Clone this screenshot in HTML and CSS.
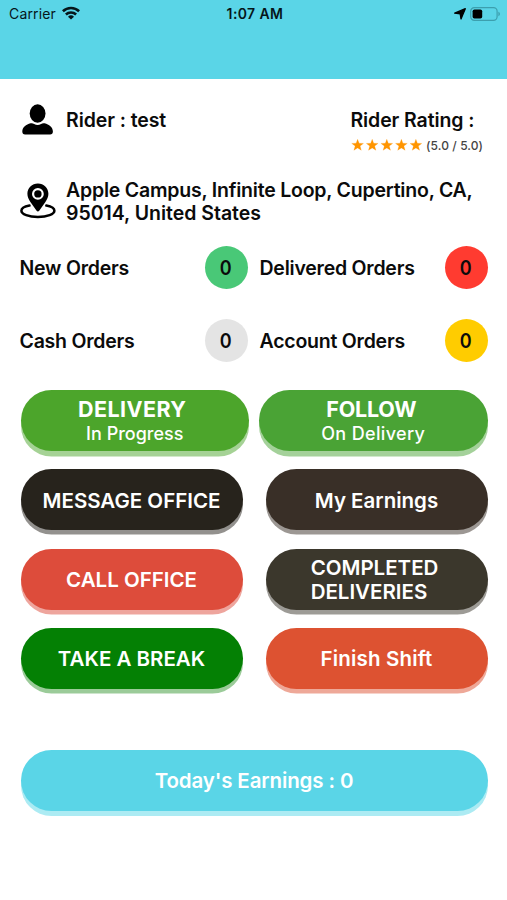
FILE: index.html
```html
<!DOCTYPE html>
<html lang="en">
<head>
<meta charset="utf-8">
<meta name="viewport" content="width=device-width, initial-scale=1">
<title>Rider</title>
<link rel="stylesheet" href="styles.css">
</head>
<body>
<header class="topbar">
  <div class="status">
    <div class="status-left">
      <span class="carrier">Carrier</span>
      <svg class="wifi" viewBox="0 0 18 14" width="18" height="14"><g fill="none" stroke="#06161a" stroke-width="2.6"><path d="M.9 5.200a11.800 11.800 0 0 1 16.200 0"/><path d="M3.900 8.500a7.400 7.400 0 0 1 10.200 0"/></g><path d="M9 13.600 6 10.800a4.300 4.300 0 0 1 6 0z" fill="#06161a"/></svg>
    </div>
    <span class="clock">1:07 AM</span>
    <div class="status-right">
      <svg viewBox="0 0 12 12" width="12" height="12"><path d="M11.300.7 7 11 6.200 5.900.7 5.200z" fill="#000" stroke="#000" stroke-width="1.300" stroke-linejoin="round"/></svg>
      <svg viewBox="0 0 31 14" width="31" height="14"><rect x=".7" y=".7" width="26.400" height="12.600" rx="3.600" fill="none" stroke="#3c9fae" stroke-width="1.200"/><rect x="2.600" y="2.500" width="9.600" height="9" rx="1.800" fill="#000"/><path d="M28.400 4.800c2 .7 2 3.700 0 4.400z" fill="#3c9fae"/></svg>
    </div>
  </div>
</header>
<main class="content">
  <section class="rider">
    <svg class="person" viewBox="0 0 31 31" width="31" height="31"><ellipse cx="15.600" cy="9.500" rx="7.900" ry="9.300"/><path d="M8.600 19.300c1.500-.4 2.500.1 3.500.8q3.500 2 7 0c1-.7 2-1.200 3.500-.8 4.500 1.200 8.200 4 8.300 8.300 0 2-1 2.900-2.800 2.900H3.100C1.300 30.500.3 29.600.3 27.600c.1-4.300 3.800-7.100 8.300-8.300z"/></svg>
    <span class="label name">Rider : test</span>
    <div class="rating">
      <span class="label rating-title">Rider Rating :</span>
      <div class="score">
        <svg class="stars" viewBox="-.6 0 71 12" width="71" height="12"><defs><path id="star" d="M6 .2 7.500 4.200 11.900 4.400 8.500 7.100 9.700 11.300 6 8.900 2.300 11.300 3.500 7.100.1 4.400 4.500 4.200z"/></defs><g fill="#ff9500" stroke="#ff9500" stroke-width=".2"><use href="#star"/><use href="#star" x="14.600"/><use href="#star" x="29.200"/><use href="#star" x="43.800"/><use href="#star" x="58.300"/></g></svg>
        <span class="score-text">(5.0 / 5.0)</span>
      </div>
    </div>
  </section>
  <section class="address">
    <svg class="pin" viewBox="0 0 36 36" width="36" height="36"><path d="M9.500 22.600C4.500 23.500 1.400 25.400 1.400 27.700c0 3.400 7.300 6.200 16.500 6.200s16.500-2.800 16.500-6.200c0-2.300-3.100-4.200-8.100-5.100" fill="none" stroke="#000" stroke-width="2.500" stroke-linecap="round"/><path fill-rule="evenodd" d="M17.900.4c5.900 0 10.500 4.500 10.500 10.300 0 3-1.300 5.300-3 8.300L19.400 27.600q-1.500 2-3 0L10.400 19C8.700 16 7.400 13.700 7.400 10.700 7.400 4.900 12 .4 17.900.4zM17.900 5a5.900 5.900 0 1 0 0 11.800 5.900 5.900 0 0 0 0-11.800z"/><circle cx="17.900" cy="10.900" r="3.700"/></svg>
    <p class="label">Apple Campus, Infinite Loop, Cupertino, CA,<br><span class="line-two">95014, United States</span></p>
  </section>
  <section class="orders">
    <div class="order"><span class="label">New Orders</span><span class="count green"><i>0</i></span></div>
    <div class="order"><span class="label">Delivered Orders</span><span class="count red"><i>0</i></span></div>
    <div class="order"><span class="label">Cash Orders</span><span class="count gray"><i>0</i></span></div>
    <div class="order"><span class="label">Account Orders</span><span class="count yellow"><i>0</i></span></div>
  </section>
  <section class="actions">
    <div class="row wide">
      <button class="btn delivery"><b>DELIVERY</b><small>In Progress</small></button>
      <button class="btn follow"><b>FOLLOW</b><small>On Delivery</small></button>
    </div>
    <div class="row">
      <button class="btn message">MESSAGE OFFICE</button>
      <button class="btn earnings">My Earnings</button>
    </div>
    <div class="row">
      <button class="btn call">CALL OFFICE</button>
      <button class="btn completed"><span>COMPLETED<br>DELIVERIES</span></button>
    </div>
    <div class="row">
      <button class="btn break">TAKE A BREAK</button>
      <button class="btn finish">Finish Shift</button>
    </div>
  </section>
  <button class="btn today">Today's Earnings : 0</button>
</main>
</body>
</html>
```
FILE: styles.css
```css
* { box-sizing: border-box; }
body { margin: 0; min-height: 900px; background: #fff; color: #0b0b0b; font-family: Inter, "Liberation Sans", sans-serif; font-feature-settings: "calt" 0; }
svg { display: block; flex: none; }
p { margin: 0; }
.topbar { height: 79px; background: #5ad5e7; }
.status { display: grid; grid-template-columns: 1fr auto 1fr; align-items: center; height: 27px; padding: 0 6px 0 9px; color: #06161a; }
.status-left { display: flex; align-items: center; gap: 6px; font-size: 14px; letter-spacing: .15px; }
.wifi { margin-top: -2px; }
.status-right { display: flex; align-items: center; justify-content: flex-end; gap: 4px; }
.clock { font-size: 14px; font-weight: 600; letter-spacing: .4px; }
.content { padding: 0 19.500px 0 20.500px; }
.label { font-size: 19.500px; line-height: 23.400px; font-weight: 600; letter-spacing: -.2px; white-space: nowrap; }
.rider { display: flex; padding-top: 25px; height: 99px; }
.person { margin: .3px 0 0 1.500px; }
.name { margin: 5px 0 0 13px; letter-spacing: -.08px; }
.rating { margin: 5px 0 0 auto; width: 137px; }
.rating-title { letter-spacing: -.1px; }
.score { display: flex; align-items: center; gap: 4.500px; height: 16px; margin-top: 5px; }
.score-text { font-size: 12px; font-weight: 500; color: #444; letter-spacing: .1px; white-space: nowrap; }
.address { display: flex; height: 67px; }
.pin { margin: 5px 0 0 -.5px; }
.address .label { margin: 1px 0 0 10px; letter-spacing: -.21px; }
.address .line-two { letter-spacing: -.02px; }
.orders { display: grid; grid-template-columns: 228px 228px; column-gap: 12px; row-gap: 30px; margin: 1.300px 0 0 -1px; }
.order { display: flex; align-items: center; justify-content: space-between; height: 43px; }
.order .label { padding-top: 1.500px; letter-spacing: -.23px; }
.count { width: 43px; height: 43px; border-radius: 50%; display: grid; place-items: center; font-size: 20px; font-weight: 600; }
.count i { font-style: normal; transform: scaleX(.9); }
.green { background: #49c877; }
.red { background: #ff3b30; }
.gray { background: #e4e4e4; }
.yellow { background: #ffcc00; }
.actions { display: grid; row-gap: 18.400px; margin-top: 27.500px; }
.row { display: flex; justify-content: space-between; }
.btn { display: flex; flex-direction: column; align-items: center; justify-content: center; width: 222px; height: 61px; padding: 2px 0 0; border: 0; border-radius: 31px; color: #fff; font: 600 20.500px/24px Inter, "Liberation Sans", sans-serif; font-feature-settings: "calt" 0; white-space: nowrap; }
.wide .btn { width: 228.500px; padding-top: 2px; }
.btn b { font-weight: 700; font-size: 21.500px; line-height: 25px; }
.btn small { font-size: 18px; line-height: 24px; font-weight: 500; }
.delivery b { margin-right: 5px; letter-spacing: .4px; }
.delivery small { letter-spacing: 0; }
.follow b { margin-right: 4px; letter-spacing: -.2px; }
.follow small { letter-spacing: .35px; }
.completed span { margin-right: 4px; text-align: left; }
.delivery { background: #4ca52b; box-shadow: 0 5.500px 0 #a5d295; }
.follow { background: #4aa335; box-shadow: 0 5.500px 0 #a4d19a; }
.message { background: #27231c; box-shadow: 0 4.500px 0 #93918e; }
.earnings { background: #392f27; box-shadow: 0 4.500px 0 #9c9793; }
.call { background: #dd4c3b; box-shadow: 0 4.500px 0 #eea59d; }
.completed { background: #3b372c; box-shadow: 0 4.500px 0 #9d9b96; padding-top: 1px; }
.break { background: #048004; box-shadow: 0 4.500px 0 #9bcb99; }
.finish { background: #dd5231; box-shadow: 0 4.500px 0 #eea898; letter-spacing: .15px; }
.today { width: 467px; margin-top: 61px; background: #5ad5e7; box-shadow: 0 5px 0 #acebf3; letter-spacing: -.12px; }
```
